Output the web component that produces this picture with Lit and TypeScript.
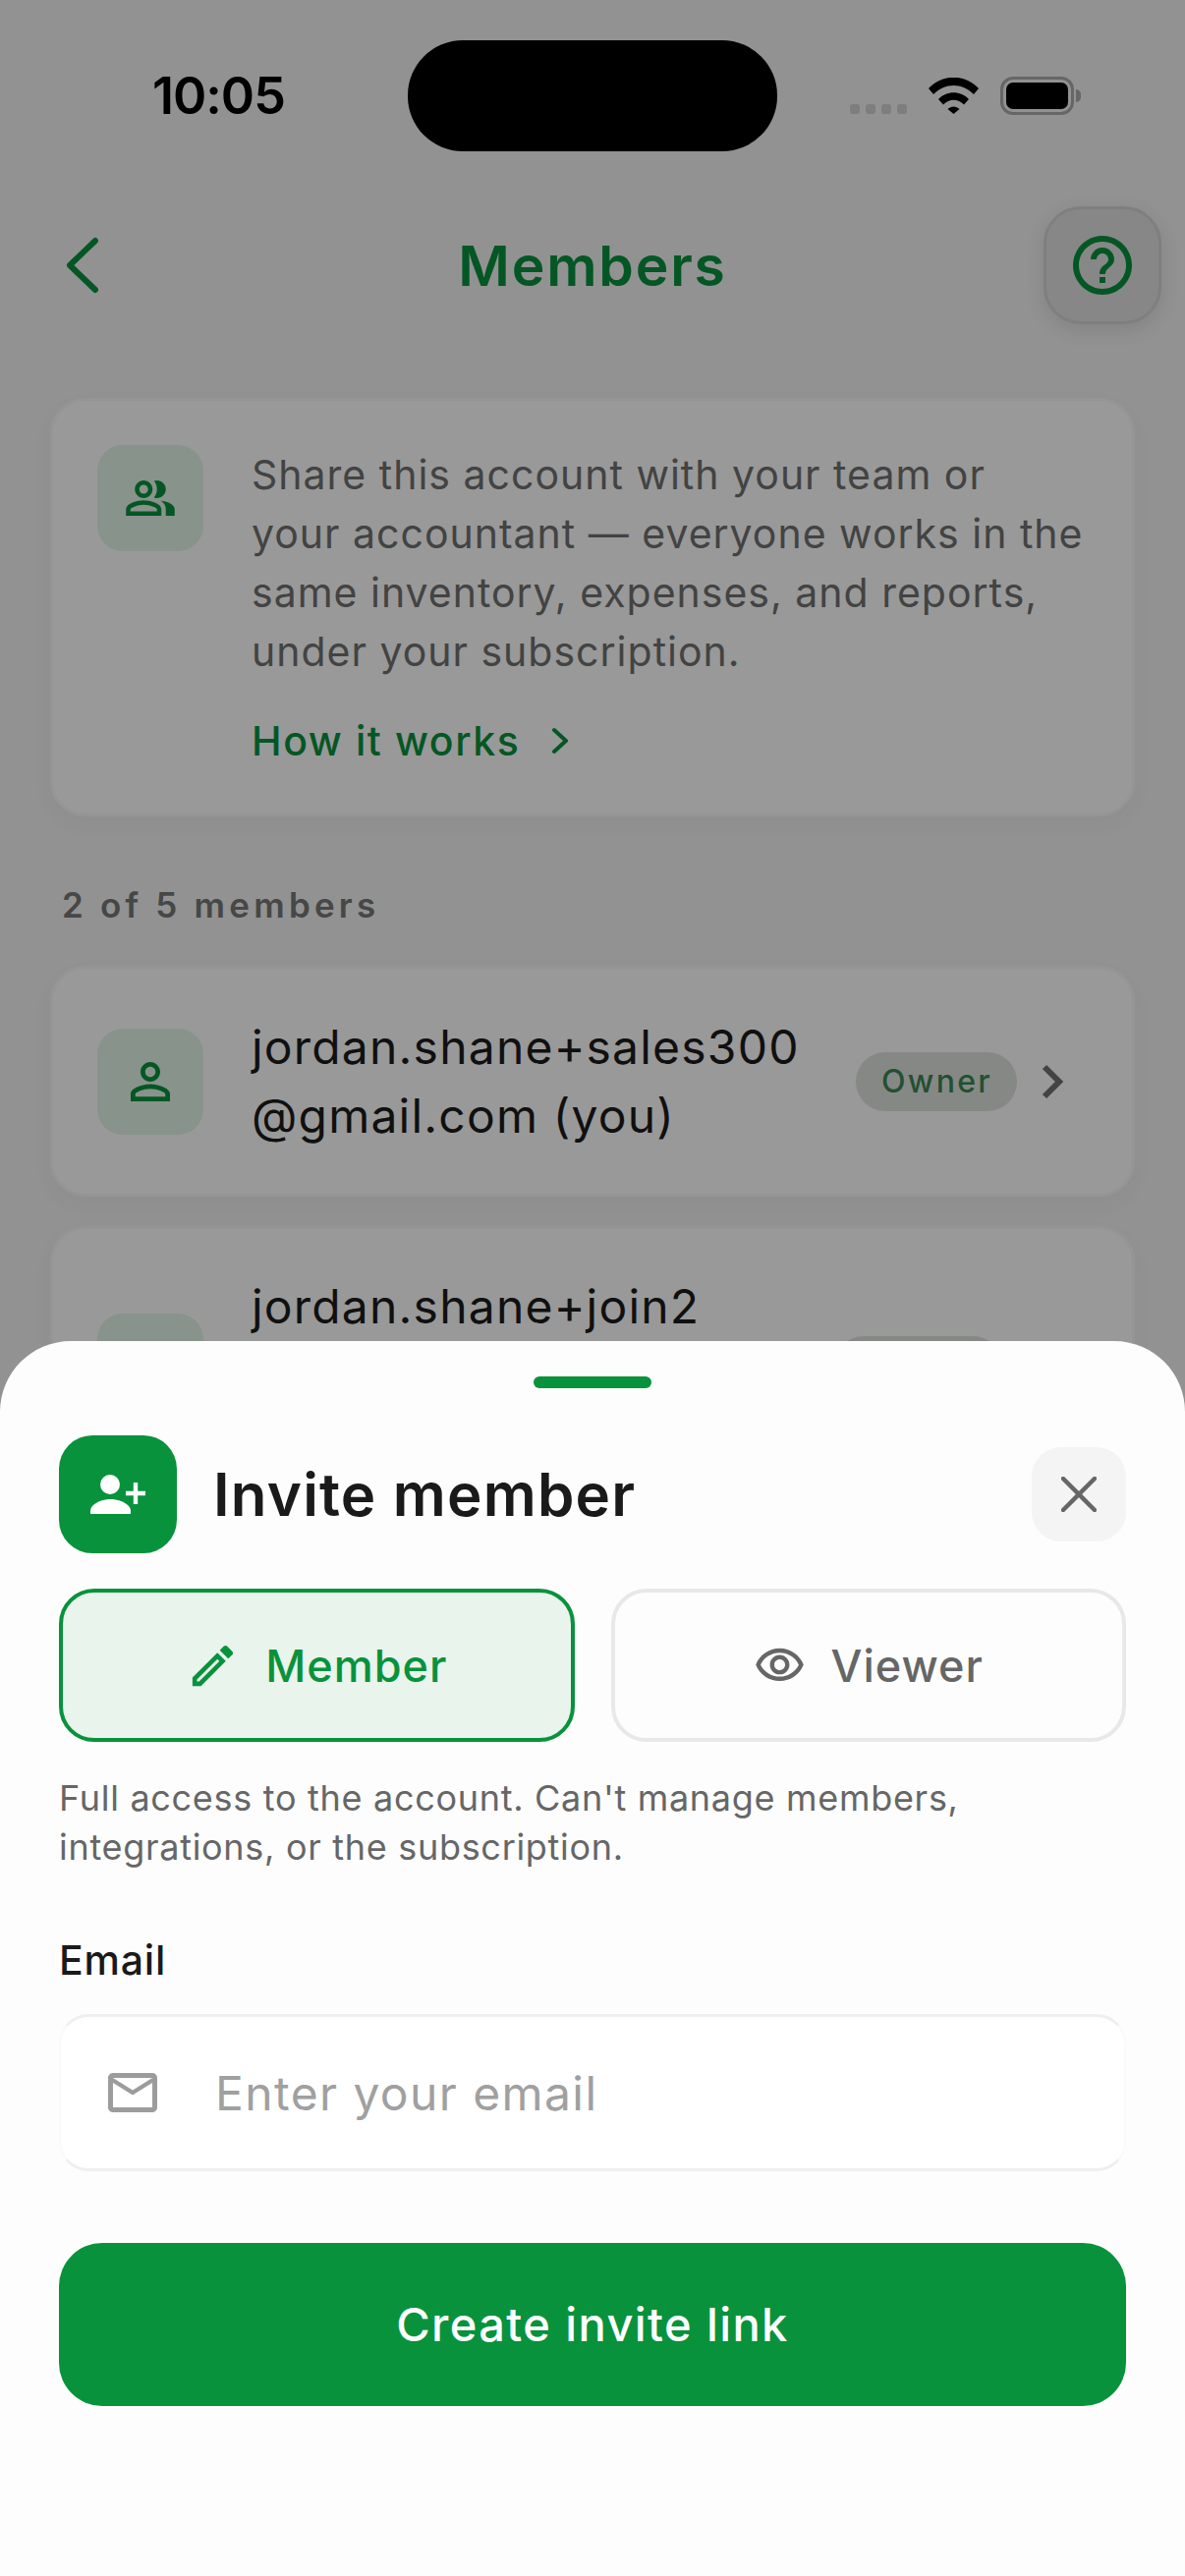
import { LitElement, css, html, svg, unsafeCSS } from "lit";
import { customElement } from "lit/decorators.js";

const GREEN = "#08923c";
const green = unsafeCSS(GREEN);

// material outlined icon paths, 24 unit viewBox
const PATHS = {
  group:
    "M16.67 13.13C18.04 14.06 19 15.32 19 17v3h4v-3c0-2.18-3.57-3.47-6.33-3.87zM15 12c2.21 0 4-1.79 4-4s-1.79-4-4-4c-.47 0-.91.1-1.33.24C14.5 5.27 15 6.58 15 8s-.5 2.73-1.33 3.76c.42.14.86.24 1.33.24zM9 12c2.21 0 4-1.79 4-4s-1.79-4-4-4-4 1.79-4 4 1.79 4 4 4zm0-6c1.1 0 2 .9 2 2s-.9 2-2 2-2-.9-2-2 .9-2 2-2zM9 13c-2.67 0-8 1.34-8 4v3h16v-3c0-2.66-5.33-4-8-4zm6 5H3v-.99C3.2 16.29 6.3 15 9 15s5.8 1.29 6 2v1z",
  person:
    "M12 5.9c1.16 0 2.1.94 2.1 2.1s-.94 2.1-2.1 2.1S9.9 9.16 9.9 8s.94-2.1 2.1-2.1m0 9c2.97 0 6.1 1.46 6.1 2.1v1.1H5.9V17c0-.64 3.13-2.1 6.1-2.1M12 4C9.79 4 8 5.79 8 8s1.79 4 4 4 4-1.79 4-4-1.79-4-4-4zm0 9c-2.67 0-8 1.34-8 4v3h16v-3c0-2.66-5.33-4-8-4z",
  edit:
    "M14.06 9.02l.92.92L5.92 19H5v-.92l9.06-9.06M17.66 3c-.25 0-.51.1-.7.29l-1.83 1.83 3.75 3.75 1.83-1.83c.39-.39.39-1.02 0-1.41l-2.34-2.34c-.2-.2-.45-.29-.71-.29zm-3.6 3.19L3 17.25V21h3.75L17.81 9.94l-3.75-3.75z",
  eye:
    "M12 6c3.79 0 7.17 2.13 8.82 5.5C19.17 14.87 15.79 17 12 17s-7.17-2.13-8.82-5.5C4.83 8.13 8.21 6 12 6m0-2C7 4 2.73 7.11 1 11.5 2.73 15.89 7 19 12 19s9.27-3.11 11-7.5C21.27 7.11 17 4 12 4zm0 5c1.38 0 2.5 1.12 2.5 2.5S13.38 14 12 14s-2.5-1.12-2.5-2.5S10.62 9 12 9m0-2c-2.48 0-4.5 2.02-4.5 4.5S9.52 16 12 16s4.5-2.02 4.5-4.5S14.48 7 12 7z",
  mail:
    "M22 6c0-1.1-.9-2-2-2H4c-1.1 0-2 .9-2 2v12c0 1.1.9 2 2 2h16c1.1 0 2-.9 2-2V6zm-2 0l-8 5-8-5h16zm0 12H4V8l8 5 8-5v10z",
  help:
    "M11 18h2v-2h-2v2zm1-16C6.48 2 2 6.48 2 12s4.48 10 10 10 10-4.48 10-10S17.52 2 12 2zm0 18c-4.41 0-8-3.59-8-8s3.59-8 8-8 8 3.59 8 8-3.59 8-8 8zm0-14c-2.21 0-4 1.79-4 4h2c0-1.1.9-2 2-2s2 .9 2 2c0 2-3 1.75-3 5h2c0-2.25 3-2.5 3-5 0-2.21-1.79-4-4-4z",
};

const icon = (d: string, size: number, fill: string) =>
  html`<svg width=${size} height=${size} viewBox="0 0 24 24" fill=${fill}>${svg`<path d=${d}></path>`}</svg>`;

const rowChevron = () =>
  html`<svg width="24" height="36" viewBox="0 0 24 36" fill="none" stroke="#717171" stroke-width="6">
    <polyline points="3,3 18,18 3,33"></polyline>
  </svg>`;

@customElement("app-root")
export class AppRoot extends LitElement {
  static styles = css`
    :host {
      display: block;
      position: relative;
      width: 1206px;
      height: 2622px;
      overflow: hidden;
      background: #f3f3f3;
      font-family: Inter, "Liberation Sans", sans-serif;
      color: #1c1c1c;
    }
    .status {
      display: grid;
      grid-template-columns: 415px 376px 1fr;
      height: 111px;
      padding-top: 41px;
    }
    .time {
      padding-left: 155px;
      font-size: 52px;
      font-weight: 600;
      line-height: 113px;
      letter-spacing: -1px;
      color: #000;
    }
    .island {
      background: #000;
      border-radius: 56px;
    }
    .sys {
      display: flex;
      align-items: flex-start;
      padding: 37px 0 0 74px;
    }
    .dots {
      display: flex;
      gap: 6px;
      margin-top: 28px;
    }
    .dots i {
      width: 10px;
      height: 10px;
      border-radius: 3px;
      background: #d2d2d2;
    }
    .wifi {
      margin-left: 22px;
      margin-top: 1px;
    }
    .battery {
      margin-left: 22px;
      display: flex;
      align-items: center;
    }
    .battery b {
      display: block;
      box-sizing: border-box;
      width: 75px;
      height: 39px;
      border: 3px solid #aaa;
      border-radius: 13px;
      padding: 3px;
    }
    .battery b::before {
      content: "";
      display: block;
      height: 100%;
      background: #000;
      border-radius: 7px;
    }
    .battery u {
      width: 5px;
      height: 13px;
      margin-left: 2px;
      border-radius: 0 6px 6px 0;
      background: #aaa;
    }
    .nav {
      display: grid;
      grid-template-columns: 1fr auto 1fr;
      align-items: center;
      height: 120px;
      margin-top: 58px;
      padding: 0 24px;
    }
    .back {
      margin-left: 43px;
    }
    .title {
      font-size: 57px;
      font-weight: 600;
      letter-spacing: 1.8px;
      color: ${green};
    }
    .help {
      justify-self: end;
      display: flex;
      align-items: center;
      justify-content: center;
      box-sizing: border-box;
      width: 120px;
      height: 120px;
      border-radius: 38px;
      background: #e2e2e2;
      border: 3px solid #d4d4d4;
      box-shadow: 0 6px 20px rgba(0, 0, 0, 0.1);
    }
    .card {
      box-sizing: border-box;
      margin: 0 51px;
      background: #fff;
      border-radius: 36px;
      border: 3px solid #f6fbf8;
      box-shadow: 0 8px 24px rgba(0, 0, 0, 0.03);
      display: flex;
      gap: 49px;
      padding: 45px;
    }
    .info {
      margin-top: 75px;
      height: 426px;
    }
    .tile {
      flex: none;
      display: flex;
      align-items: center;
      justify-content: center;
      width: 108px;
      height: 108px;
      border-radius: 26px;
      background: #e3f6ea;
    }
    .copy {
      font-size: 41px;
      line-height: 60px;
      letter-spacing: 1px;
      color: #717171;
    }
    .link {
      display: flex;
      align-items: center;
      gap: 31px;
      margin-top: 31px;
      font-size: 41px;
      line-height: 60px;
      font-weight: 500;
      letter-spacing: 1.6px;
      color: ${green};
    }
    .count {
      margin: 65px 0 37px 63px;
      font-size: 35px;
      line-height: 50px;
      font-weight: 600;
      letter-spacing: 4.2px;
      color: #777;
    }
    .member {
      align-items: center;
      height: 235px;
      padding: 0 68px 0 45px;
      margin-bottom: 30px;
    }
    .member.second {
      align-items: flex-start;
      height: 400px;
      padding-top: 44px;
    }
    .second .tile {
      margin-top: 42px;
    }
    .second .who {
      height: 192px;
    }
    .second .side {
      margin-top: 65px;
      gap: 40px;
    }
    .who {
      flex: 1;
      font-size: 48px;
      line-height: 70px;
      letter-spacing: 1.2px;
      color: #1c1c1c;
      white-space: nowrap;
    }
    .side {
      display: flex;
      align-items: center;
      gap: 25px;
    }
    .pill {
      padding: 0 25px 0 26px;
      height: 60px;
      line-height: 60px;
      border-radius: 30px;
      background: #e0e3de;
      font-size: 32px;
      font-weight: 500;
      letter-spacing: 2.3px;
      color: #3a8553;
    }
    .scrim {
      position: absolute;
      inset: 0;
      background: rgba(0, 0, 0, 0.4);
    }
    .sheet {
      position: absolute;
      left: 0;
      right: 0;
      bottom: 0;
      height: 1257px;
      box-sizing: border-box;
      background: #fdfdfd;
      border-radius: 72px 72px 0 0;
      padding: 36px 60px 0;
    }
    .handle {
      width: 120px;
      height: 12px;
      margin: 0 auto;
      border-radius: 6px;
      background: ${green};
    }
    .head {
      display: flex;
      align-items: center;
      margin-top: 48px;
    }
    .badge {
      display: flex;
      align-items: center;
      justify-content: center;
      width: 120px;
      height: 120px;
      border-radius: 34px;
      background: ${green};
    }
    .head h1 {
      flex: 1;
      margin: 0 0 0 37px;
      font-size: 60px;
      font-weight: 600;
      letter-spacing: 1.2px;
      color: #1a1a1a;
    }
    .close {
      display: flex;
      align-items: center;
      justify-content: center;
      width: 96px;
      height: 96px;
      border-radius: 30px;
      background: #f4f4f4;
    }
    .tabs {
      display: grid;
      grid-template-columns: 1fr 1fr;
      gap: 37px;
      margin-top: 36px;
    }
    .tab {
      box-sizing: border-box;
      height: 156px;
      border-radius: 36px;
      border: 4px solid #e8e8e8;
      display: flex;
      align-items: center;
      justify-content: center;
      gap: 26px;
      font-size: 45px;
      font-weight: 500;
      letter-spacing: 1px;
      color: #666;
    }
    .tab.on {
      border-color: ${green};
      background: #e9f4ec;
      color: ${green};
    }
    .hint {
      margin: 32px 0 0;
      font-size: 36px;
      line-height: 50px;
      letter-spacing: 0.7px;
      color: #666;
    }
    .label {
      margin-top: 65px;
      font-size: 41px;
      line-height: 50px;
      font-weight: 500;
      letter-spacing: 0.8px;
      color: #1a1a1a;
    }
    .field {
      box-sizing: border-box;
      display: flex;
      align-items: center;
      gap: 54px;
      height: 160px;
      margin-top: 30px;
      padding-left: 43px;
      border-radius: 30px;
      background: #fff;
      border-top: 3px solid #efefef;
      border-bottom: 3px solid #efefef;
      border-left: 2px solid #fafafa;
      border-right: 2px solid #fafafa;
      font-size: 48px;
      letter-spacing: 1.4px;
      color: #a0a0a0;
    }
    .cta {
      box-sizing: border-box;
      display: flex;
      align-items: center;
      justify-content: center;
      height: 166px;
      margin-top: 73px;
      padding-bottom: 2px;
      border-radius: 44px;
      background: ${green};
      color: #fff;
      font-size: 47px;
      font-weight: 500;
      letter-spacing: 1.4px;
    }
  `;

  private renderStatus() {
    return html`
      <div class="status">
        <div class="time">10:05</div>
        <div class="island"></div>
        <div class="sys">
          <div class="dots"><i></i><i></i><i></i><i></i></div>
          <svg class="wifi" width="51" height="37" viewBox="0 0 51 37" fill="#000">
            <path d="M0 11C14-4 37-4 51 11L46 17C34 5 17 5 5 17Z"></path>
            <path d="M10 22C18 13 33 13 41 22L36 27.5C30 21 21 21 15 27.5Z"></path>
            <path d="M19.5 32C23 28.5 28 28.5 31.5 32L25.5 37Z"></path>
          </svg>
          <div class="battery"><b></b><u></u></div>
        </div>
      </div>
    `;
  }

  private renderPage() {
    return html`
      ${this.renderStatus()}
      <div class="nav">
        <svg class="back" width="34" height="58" viewBox="0 0 34 58" fill="none" stroke=${GREEN} stroke-width="6" stroke-linecap="round" stroke-linejoin="round">
          <polyline points="30,4 4,29 30,54"></polyline>
        </svg>
        <div class="title">Members</div>
        <div class="help">${icon(PATHS.help, 72, GREEN)}</div>
      </div>

      <div class="card info">
        <div class="tile">${icon(PATHS.group, 54, GREEN)}</div>
        <div>
          <div class="copy">
            Share this account with your team or<br />
            your accountant — everyone works in the<br />
            same inventory, expenses, and reports,<br />
            under your subscription.
          </div>
          <div class="link">
            How it works
            <svg width="18" height="28" viewBox="0 0 18 28" fill="none" stroke=${GREEN} stroke-width="4" stroke-linecap="round" stroke-linejoin="round">
              <polyline points="3,3 15,14 3,25"></polyline>
            </svg>
          </div>
        </div>
      </div>

      <div class="count">2 of 5 members</div>

      <div class="card member">
        <div class="tile">${icon(PATHS.person, 60, GREEN)}</div>
        <div class="who">jordan.shane+sales300<br />@gmail.com (you)</div>
        <div class="side">
          <div class="pill">Owner</div>
          ${rowChevron()}
        </div>
      </div>

      <div class="card member second">
        <div class="tile">${icon(PATHS.person, 60, GREEN)}</div>
        <div class="who">jordan.shane+join2<br />@gmail.com</div>
        <div class="side">
          <div class="pill">Viewer</div>
          ${rowChevron()}
        </div>
      </div>
    `;
  }

  private renderSheet() {
    return html`
      <div class="sheet">
        <div class="handle"></div>
        <div class="head">
          <div class="badge">
            <svg width="56" height="40" viewBox="0 0 56 40" fill="#fff">
              <circle cx="20" cy="10" r="10"></circle>
              <path d="M0 40v-3c0-7 11-12 20.5-12S41 30 41 37v3Z"></path>
              <path d="M43.8 8h4.4v8.8H56v4.4h-7.8V30h-4.4v-8.8H36v-4.4h7.8Z"></path>
            </svg>
          </div>
          <h1>Invite member</h1>
          <div class="close">
            <svg width="36" height="36" viewBox="0 0 36 36" fill="none" stroke="#666" stroke-width="4.5" stroke-linecap="round">
              <path d="M2 2 34 34M34 2 2 34"></path>
            </svg>
          </div>
        </div>

        <div class="tabs">
          <div class="tab on">${icon(PATHS.edit, 55, GREEN)}<span>Member</span></div>
          <div class="tab">${icon(PATHS.eye, 53, "#666")}<span>Viewer</span></div>
        </div>

        <p class="hint">
          Full access to the account. Can't manage members,<br />
          integrations, or the subscription.
        </p>

        <div class="label">Email</div>
        <div class="field">${icon(PATHS.mail, 60, "#9c9c9c")}<span>Enter your email</span></div>

        <div class="cta">Create invite link</div>
      </div>
    `;
  }

  render() {
    return html`
      ${this.renderPage()}
      <div class="scrim"></div>
      ${this.renderSheet()}
    `;
  }
}
